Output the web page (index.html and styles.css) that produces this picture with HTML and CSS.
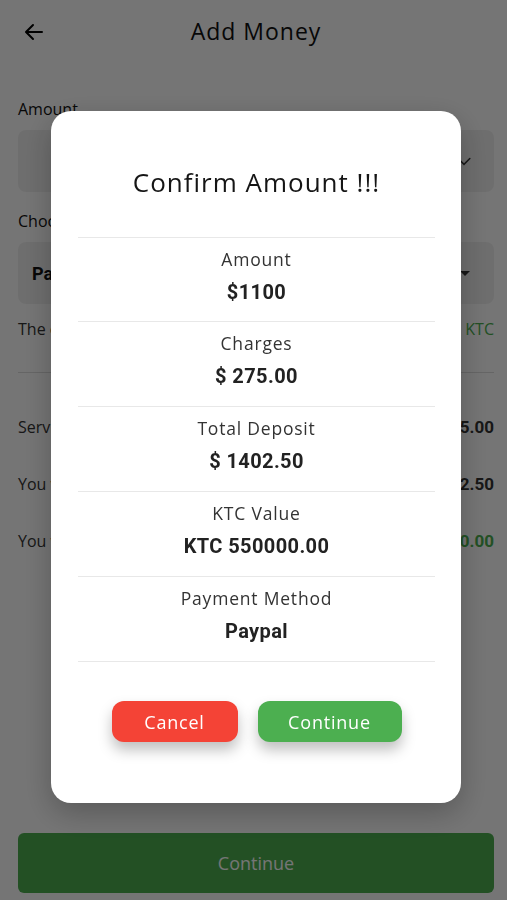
FILE: index.html
```html
<!DOCTYPE html>
<html lang="en">
<head>
    <meta charset="UTF-8">
    <title>Add Money</title>
    <link rel="stylesheet" href="styles.css">
</head>
<body>
<div class="screen">
    <div class="topbar">
        <svg class="back" width="24" height="24" viewBox="0 0 24 24">
            <path d="M20 12H4.5M11 5l-7 7 7 7" fill="none" stroke="#000" stroke-width="2" stroke-linecap="round" stroke-linejoin="round"/>
        </svg>
        <h1 class="title">Add Money</h1>
    </div>

    <div class="form">
        <p class="label">Amount</p>
        <div class="field">
            <span class="field-text"></span>
            <svg width="20" height="20" viewBox="0 0 24 24">
                <path d="M5 9l7 7 7-7" fill="none" stroke="#333" stroke-width="1.8" stroke-linecap="round"/>
            </svg>
        </div>

        <p class="label">Choose Payment Method</p>
        <div class="field">
            <span class="field-text bold">Paypal</span>
            <span class="caret"></span>
        </div>

        <div class="rate">
            <span>The current rate is $1 =</span>
            <span class="green">500 KTC</span>
        </div>

        <div class="sep"></div>

        <div class="line">
            <span>Service Charges (25%)</span>
            <span class="num">$ 275.00</span>
        </div>
        <div class="line">
            <span>You will pay</span>
            <span class="num">$ 1402.50</span>
        </div>
        <div class="line">
            <span>You will get</span>
            <span class="num green">KTC 550000.00</span>
        </div>
    </div>

    <button class="main-btn">Continue</button>
</div>

<div class="overlay">
    <div class="dialog">
        <h2 class="dialog-title">Confirm Amount !!!</h2>
        <div class="rows">
            <div class="row">
                <span class="row-label">Amount</span>
                <span class="row-value">$1100</span>
            </div>
            <div class="row">
                <span class="row-label">Charges</span>
                <span class="row-value">$ 275.00</span>
            </div>
            <div class="row">
                <span class="row-label">Total Deposit</span>
                <span class="row-value">$ 1402.50</span>
            </div>
            <div class="row">
                <span class="row-label">KTC Value</span>
                <span class="row-value">KTC 550000.00</span>
            </div>
            <div class="row">
                <span class="row-label">Payment Method</span>
                <span class="row-value">Paypal</span>
            </div>
        </div>
        <div class="actions">
            <button class="btn btn-cancel">Cancel</button>
            <button class="btn btn-ok">Continue</button>
        </div>
    </div>
</div>
</body>
</html>
```

FILE: styles.css
```css
body{
    margin: 0;
    background: #fff;
    font-family: "Open Sans", "Noto Sans", sans-serif;
    color: #111;
}

.screen{
    width: 507px;
    height: 900px;
    display: flex;
    flex-direction: column;
    box-sizing: border-box;
    padding: 0 13px 7px 18px;
}

.topbar{
    height: 64px;
    display: flex;
    align-items: center;
}
.back{
    margin-left: 4px;
}
.title{
    flex: 1;
    margin: -3px 0 0 -28px;
    text-align: center;
    font-size: 23px;
    font-weight: 500;
    letter-spacing: 1px;
}

.form{
    flex: 1;
}

.label{
    margin: 18px 0 10px;
    font-size: 16px;
    line-height: 22px;
}
.form .label:first-child{
    margin-top: 34px;
}

.field{
    height: 62px;
    border-radius: 8px;
    background: #f0f0f0;
    display: flex;
    align-items: center;
    justify-content: space-between;
    padding: 0 20px 0 14px;
}
.field-text{
    font-size: 18px;
}
.bold{
    font-family: Roboto, sans-serif;
    font-weight: 700;
}
.caret{
    width: 0;
    height: 0;
    border-left: 5px solid transparent;
    border-right: 5px solid transparent;
    border-top: 5px solid #333;
    margin-right: 4px;
}

.rate{
    display: flex;
    justify-content: space-between;
    margin-top: 14px;
    font-size: 16px;
    line-height: 22px;
    color: #333;
}
.green{
    color: #4caf50;
}

.sep{
    height: 1px;
    background: #ddd;
    margin: 32px 0 43px;
}

.line{
    display: flex;
    justify-content: space-between;
    font-size: 16px;
    line-height: 22px;
    color: #333;
    height: 57px;
}
.num{
    font-family: Roboto, sans-serif;
    font-weight: 700;
    font-size: 17px;
}

.main-btn{
    height: 60px;
    border: 0;
    border-radius: 6px;
    background: #4caf50;
    color: #fff;
    font-family: "Open Sans", sans-serif;
    font-size: 18px;
}

/* dim layer with dialog */
.overlay{
    position: fixed;
    inset: 0;
    background: rgba(0,0,0,0.54);
    display: flex;
    justify-content: center;
    align-items: flex-start;
    padding-top: 111px;
}

.dialog{
    width: 410px;
    margin-left: 5px;
    box-sizing: border-box;
    background: #fff;
    border-radius: 20px;
    padding: 0 26px 61px 27px;
    box-shadow: 0 10px 30px rgba(0,0,0,0.25);
}

.dialog-title{
    margin: 0;
    height: 126px;
    line-height: 142px;
    text-align: center;
    font-size: 26px;
    font-weight: 500;
    letter-spacing: 1px;
    color: #151515;
    border-bottom: 1px solid #e8e8e8;
}

.row{
    height: 85px;
    border-bottom: 1px solid #e8e8e8;
    display: flex;
    flex-direction: column;
    align-items: center;
    padding-top: 9px;
    box-sizing: border-box;
}
.row:first-child{
    height: 84px;
}
.row-label{
    font-size: 17.5px;
    letter-spacing: 0.8px;
    color: #333;
    line-height: 24px;
}
.row-value{
    font-family: Roboto, sans-serif;
    font-weight: 700;
    font-size: 20px;
    letter-spacing: 0.4px;
    color: #222;
    margin-top: 9px;
}

.actions{
    display: flex;
    justify-content: center;
    gap: 20px;
    margin-top: 39px;
}
.btn{
    height: 41px;
    border: 0;
    border-radius: 12px;
    color: #fff;
    font-family: "Open Sans", sans-serif;
    font-size: 18px;
    letter-spacing: 0.8px;
    box-shadow: 0 8px 14px rgba(0,0,0,0.25);
}
.btn-cancel{
    width: 126px;
    background: #f44336;
}
.btn-ok{
    width: 144px;
    background: #4caf50;
}
```
